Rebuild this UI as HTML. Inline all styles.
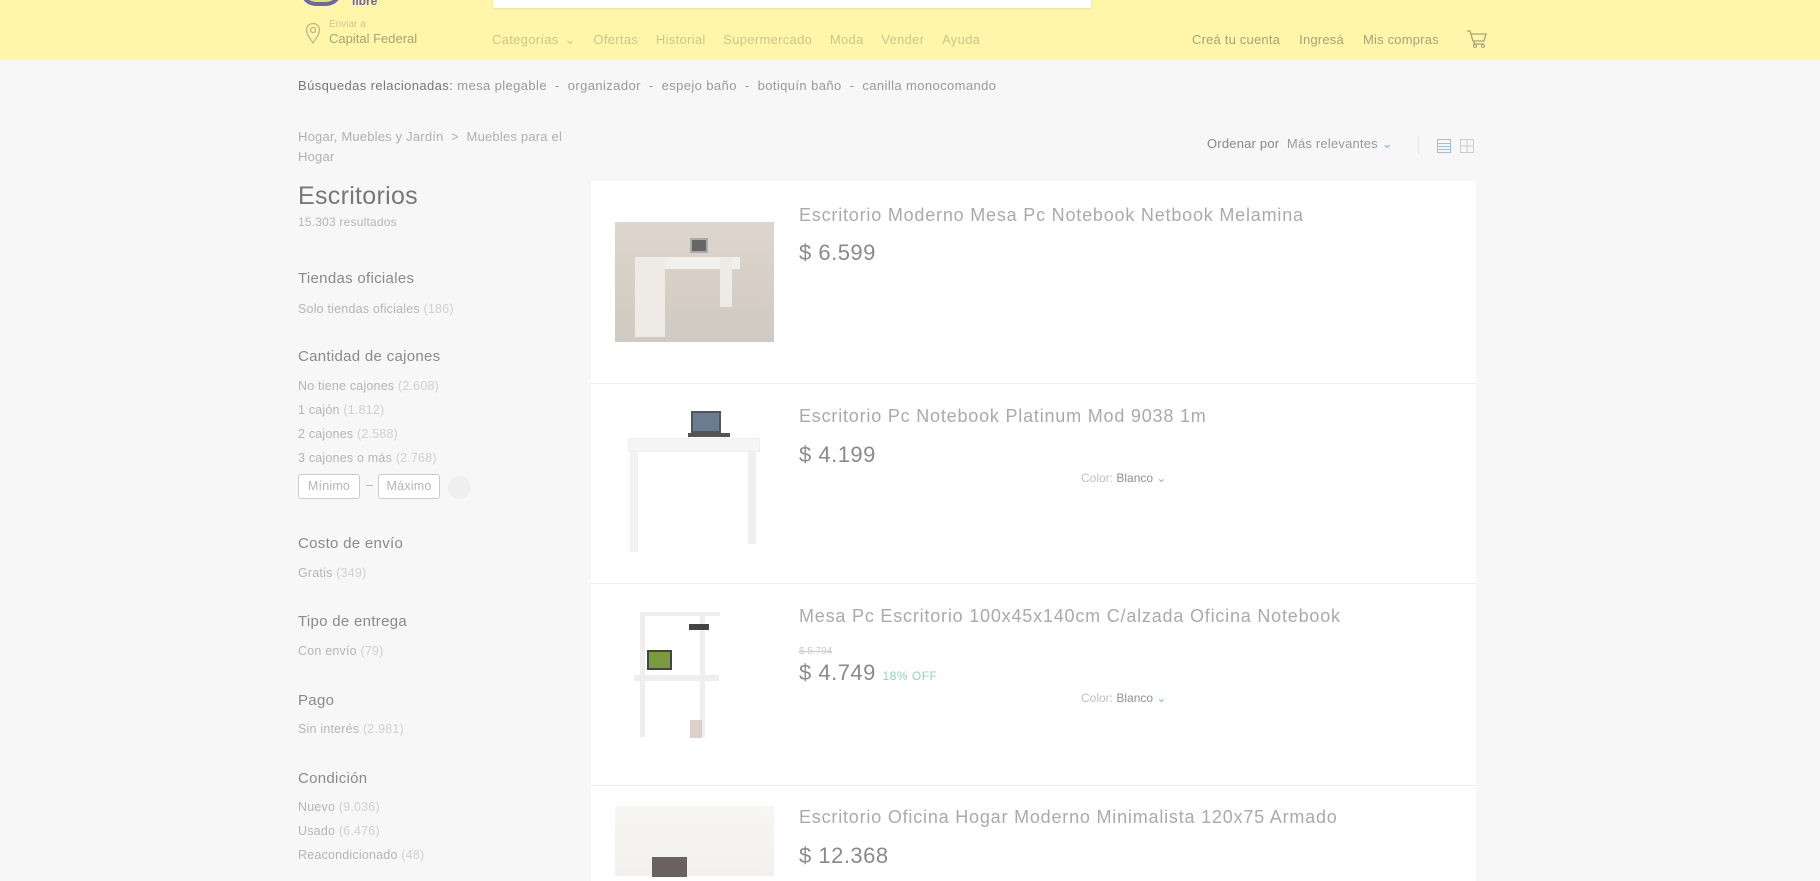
<!DOCTYPE html>
<html><head><meta charset="utf-8"><style>
*{margin:0;padding:0;box-sizing:border-box}
body{width:1820px;height:876px;overflow:hidden;background:#f7f7f7;font-family:"Liberation Sans",sans-serif;position:relative;color:#888}
.a{position:absolute;white-space:nowrap}
#hd{position:absolute;left:0;top:0;width:1820px;height:60px;background:#fff6a9}
.nav{color:#ccc68a;font-size:13px;letter-spacing:.3px;word-spacing:2px}
.h{font-size:15px;color:#8a8a8a;letter-spacing:.3px}
.i{font-size:12.5px;color:#b5b5b5;letter-spacing:.2px}
.i span{color:#d0d0d0}
.t{font-size:18px;color:#aaa;left:799px;letter-spacing:.8px}
.p{font-size:22px;color:#8a8a8a;left:799px;letter-spacing:.5px}
.c{font-size:12px;color:#c0c0c0;left:1081px}
.c b{font-weight:normal;color:#909090}
.div{position:absolute;left:591px;width:885px;height:1px;background:#eee}
</style></head><body>
<div id="hd"></div>
<div class="a" style="left:300px;top:-10px;width:42px;height:16px;border:4px solid #6c64b0;border-top:none;border-radius:0 0 20px 20px;background:#e8de60"></div>
<div class="a" style="left:352px;top:-6px;font-size:12px;font-weight:bold;color:#6c64b0">libre</div>
<div class="a" style="left:493px;top:0;width:598px;height:8px;background:#fff;box-shadow:0 1px 2px rgba(0,0,0,.1)"></div>
<svg class="a" style="left:305px;top:22px" width="16" height="22" viewBox="0 0 16 22"><path d="M8 21C3 14 1.5 11 1.5 8a6.5 6.5 0 0 1 13 0c0 3-1.5 6-6.5 13z" fill="none" stroke="#bdb787" stroke-width="1.3"/><circle cx="8" cy="8" r="2.5" fill="none" stroke="#bdb787" stroke-width="1.3"/></svg>
<div class="a" style="left:329px;top:19px;font-size:10px;color:#cfc88a">Enviar a</div>
<div class="a" style="left:329px;top:31px;font-size:13px;color:#a8a27a">Capital Federal</div>
<div class="a nav" style="left:492px;top:32px">Categorías ⌄ &nbsp;&nbsp;Ofertas &nbsp;&nbsp;Historial &nbsp;&nbsp;Supermercado &nbsp;&nbsp;Moda &nbsp;&nbsp;Vender &nbsp;&nbsp;Ayuda</div>
<div class="a" style="left:1192px;top:32px;font-size:13px;color:#a8a27a;letter-spacing:.2px">Creá tu cuenta &nbsp;&nbsp;&nbsp;&nbsp;Ingresá &nbsp;&nbsp;&nbsp;&nbsp;Mis compras</div>
<svg class="a" style="left:1466px;top:29px" width="22" height="20" viewBox="0 0 22 20"><path d="M1 2h3l3 10h11l2-7H5.5M8 12v3h10" fill="none" stroke="#a8a27a" stroke-width="1.3"/><circle cx="9" cy="17" r="1.5" fill="none" stroke="#a8a27a"/><circle cx="17" cy="17" r="1.5" fill="none" stroke="#a8a27a"/></svg>
<div class="a" style="left:298px;top:78px;font-size:13px;color:#999;letter-spacing:.4px"><span style="color:#777">Búsquedas relacionadas:</span> mesa plegable &nbsp;-&nbsp; organizador &nbsp;-&nbsp; espejo baño &nbsp;-&nbsp; botiquín baño &nbsp;-&nbsp; canilla monocomando</div>
<div class="a" style="left:298px;top:127px;font-size:13px;color:#b0b0b0;line-height:20px;letter-spacing:.2px">Hogar, Muebles y Jardín &nbsp;&gt;&nbsp; Muebles para el<br>Hogar</div>
<div class="a" style="left:1207px;top:136px;font-size:13px;color:#999;letter-spacing:.2px"><span style="color:#888">Ordenar por</span>&nbsp; Más relevantes <span style="color:#8ab4e8">⌄</span></div>
<div class="a" style="left:1418px;top:136px;width:1px;height:18px;background:#e5e5e5"></div>
<svg class="a" style="left:1436px;top:138px" width="16" height="16"><rect x="1.5" y="1.5" width="13" height="13" fill="none" stroke="#9cc0ec"/><path d="M2 5.5h12M2 8.5h12M2 11.5h12" stroke="#9cc0ec"/></svg>
<svg class="a" style="left:1459px;top:138px" width="16" height="16"><rect x="1.5" y="1.5" width="13" height="13" fill="none" stroke="#ccc"/><path d="M8 2v12M2 8h12" stroke="#ccc"/></svg>
<div class="a" style="left:298px;top:182px;font-size:25px;color:#777;letter-spacing:.3px">Escritorios</div>
<div class="a i" style="left:298px;top:215px;font-size:12px">15.303 resultados</div>
<div class="a h" style="left:298px;top:270px">Tiendas oficiales</div>
<div class="a i" style="left:298px;top:302px">Solo tiendas oficiales <span>(186)</span></div>
<div class="a h" style="left:298px;top:348px">Cantidad de cajones</div>
<div class="a i" style="left:298px;top:379px">No tiene cajones <span>(2.608)</span></div>
<div class="a i" style="left:298px;top:403px">1 cajón <span>(1.812)</span></div>
<div class="a i" style="left:298px;top:427px">2 cajones <span>(2.588)</span></div>
<div class="a i" style="left:298px;top:451px">3 cajones o más <span>(2.768)</span></div>
<div class="a i" style="left:298px;top:474px;width:62px;height:25px;border:1px solid #ccc;border-radius:3px;background:#fff;text-align:center;line-height:23px">Mínimo</div>
<div class="a i" style="left:366px;top:478px">–</div>
<div class="a i" style="left:378px;top:474px;width:62px;height:25px;border:1px solid #ccc;border-radius:3px;background:#fff;text-align:center;line-height:23px">Máximo</div>
<div class="a" style="left:448px;top:476px;width:23px;height:23px;border-radius:50%;background:#efefef"></div>
<div class="a h" style="left:298px;top:535px">Costo de envío</div>
<div class="a i" style="left:298px;top:566px">Gratis <span>(349)</span></div>
<div class="a h" style="left:298px;top:613px">Tipo de entrega</div>
<div class="a i" style="left:298px;top:644px">Con envío <span>(79)</span></div>
<div class="a h" style="left:298px;top:692px">Pago</div>
<div class="a i" style="left:298px;top:722px">Sin interés <span>(2.981)</span></div>
<div class="a h" style="left:298px;top:770px">Condición</div>
<div class="a i" style="left:298px;top:800px">Nuevo <span>(9.036)</span></div>
<div class="a i" style="left:298px;top:824px">Usado <span>(6.476)</span></div>
<div class="a i" style="left:298px;top:848px">Reacondicionado <span>(48)</span></div>
<div class="a" style="left:591px;top:181px;width:885px;height:700px;background:#fff"></div>
<div class="div" style="top:383px"></div><div class="div" style="top:583px"></div><div class="div" style="top:785px"></div>
<!-- item1 -->
<div class="a" style="left:615px;top:222px;width:159px;height:120px;background:linear-gradient(#ddd6cc,#d4cdc3 70%,#cfcac4)"></div>
<div class="a" style="left:635px;top:257px;width:105px;height:12px;background:#f2f0ec"></div>
<div class="a" style="left:635px;top:257px;width:30px;height:80px;background:#eeebe6"></div>
<div class="a" style="left:720px;top:257px;width:12px;height:50px;background:#eeebe6"></div>
<div class="a" style="left:690px;top:238px;width:18px;height:15px;background:#666;border:2px solid #aaa"></div>
<div class="a t" style="top:205px">Escritorio Moderno Mesa Pc Notebook Netbook Melamina</div>
<div class="a p" style="top:240px">$ 6.599</div>
<!-- item2 -->
<div class="a" style="left:628px;top:438px;width:132px;height:14px;background:#f5f5f5;border:1px solid #eee"></div>
<div class="a" style="left:630px;top:452px;width:8px;height:100px;background:#f3f3f3"></div>
<div class="a" style="left:748px;top:452px;width:8px;height:92px;background:#f0f0f0"></div>
<div class="a" style="left:691px;top:411px;width:30px;height:22px;background:#6a7c90;border:2px solid #555"></div>
<div class="a" style="left:688px;top:433px;width:42px;height:4px;background:#555"></div>
<div class="a t" style="top:406px">Escritorio Pc Notebook Platinum Mod 9038 1m</div>
<div class="a p" style="top:442px">$ 4.199</div>
<div class="a c" style="top:471px">Color: <b>Blanco</b> <span style="color:#8ab4e8">⌄</span></div>
<!-- item3 -->
<div class="a" style="left:640px;top:612px;width:80px;height:4px;background:#eee"></div>
<div class="a" style="left:640px;top:612px;width:5px;height:125px;background:#eee"></div>
<div class="a" style="left:700px;top:612px;width:5px;height:125px;background:#eee"></div>
<div class="a" style="left:634px;top:675px;width:85px;height:6px;background:#eee"></div>
<div class="a" style="left:647px;top:650px;width:25px;height:20px;background:#7a9a40;border:2px solid #444"></div>
<div class="a" style="left:689px;top:624px;width:20px;height:6px;background:#444"></div>
<div class="a" style="left:690px;top:720px;width:12px;height:18px;background:#ddd0cc"></div>
<div class="a t" style="top:606px">Mesa Pc Escritorio 100x45x140cm C/alzada Oficina Notebook</div>
<div class="a" style="left:799px;top:646px;font-size:10px;color:#ccc;text-decoration:line-through">$ 5.794</div>
<div class="a p" style="top:660px">$ 4.749 <span style="font-size:12px;color:#8fd6b4">18% OFF</span></div>
<div class="a c" style="top:691px">Color: <b>Blanco</b> <span style="color:#8ab4e8">⌄</span></div>
<!-- item4 -->
<div class="a" style="left:615px;top:806px;width:159px;height:70px;background:linear-gradient(#f8f6f2,#f3f1ed)"></div>
<div class="a" style="left:652px;top:857px;width:35px;height:20px;background:#6a6262"></div>
<div class="a t" style="top:807px">Escritorio Oficina Hogar Moderno Minimalista 120x75 Armado</div>
<div class="a p" style="top:843px">$ 12.368</div>
</body></html>
